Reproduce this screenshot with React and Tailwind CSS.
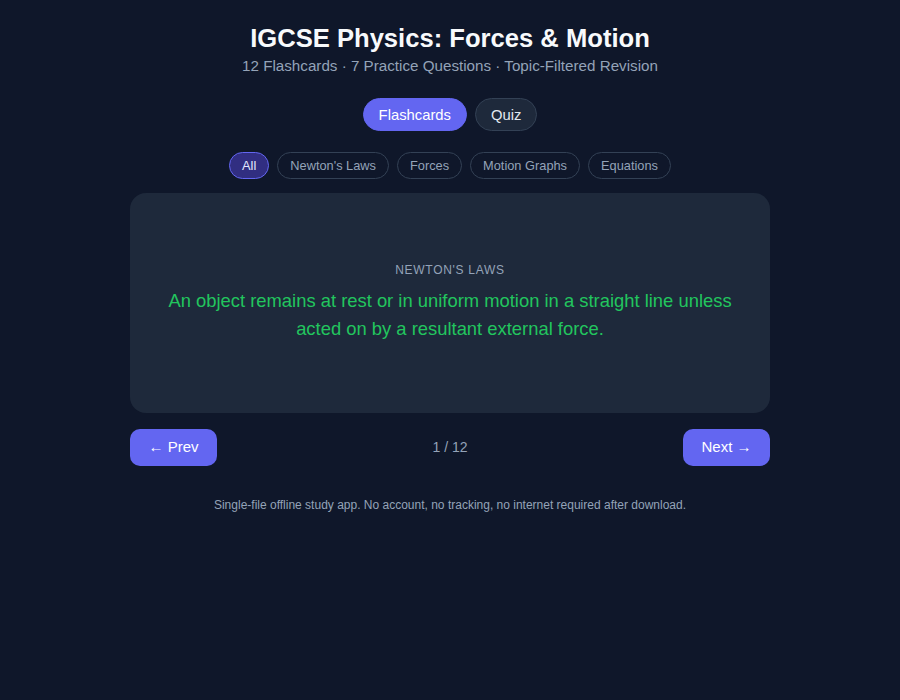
import { useState } from 'react';

const topics = ['All', "Newton's Laws", 'Forces', 'Motion Graphs', 'Equations'];

const cards = [
  {
    topic: "Newton's Laws",
    text: 'An object remains at rest or in uniform motion in a straight line unless acted on by a resultant external force.',
  },
];

export default function App() {
  const [mode, setMode] = useState('flashcards');
  const [topic, setTopic] = useState('All');
  const [index] = useState(0);
  const card = cards[index];

  return (
    <div className="min-h-screen bg-[#0f172a] text-[#e2e8f0] font-['Liberation_Sans',Arial,sans-serif]">
      <div className="max-w-[640px] mx-auto pt-[23px] pb-10">
        <header className="text-center">
          <h1 className="text-[25.6px] leading-[30px] font-bold text-[#f8fafc]">IGCSE Physics: Forces &amp; Motion</h1>
          <p className="text-[15.2px] leading-[18px] mt-[4px] text-[#94a3b8]">
            12 Flashcards · 7 Practice Questions · Topic-Filtered Revision
          </p>
        </header>

        <div className="flex justify-center gap-2 mt-[23px]">
          <button
            onClick={() => setMode('flashcards')}
            className={`h-[33px] pt-[1px] px-[15px] rounded-full text-[14.8px] border ${mode === 'flashcards' ? 'bg-[#6366f1] border-[#6366f1] text-white' : 'bg-[#1e293b] border-[#334155] text-[#e2e8f0]'}`}
          >
            Flashcards
          </button>
          <button
            onClick={() => setMode('quiz')}
            className={`h-[33px] pt-[1px] px-[15px] rounded-full text-[14.8px] border ${mode === 'quiz' ? 'bg-[#6366f1] border-[#6366f1] text-white' : 'bg-[#1e293b] border-[#334155] text-[#e2e8f0]'}`}
          >
            Quiz
          </button>
        </div>

        <div className="flex justify-center gap-2 mt-[21px]">
          {topics.map((t) => (
            <button
              key={t}
              onClick={() => setTopic(t)}
              className={`h-[27px] px-3 rounded-full text-[12.8px] border ${topic === t ? 'bg-[#312e81] border-[#6366f1] text-[#e0e7ff]' : 'bg-transparent border-[#334155] text-[#94a3b8]'}`}
            >
              {t}
            </button>
          ))}
        </div>

        <div className="mt-[14px] h-[220px] rounded-2xl bg-[#1e293b] flex flex-col items-center pt-[70px] px-8 text-center">
          <div className="text-[12px] leading-[14px] tracking-[0.06em] uppercase text-[#94a3b8]">{card.topic}</div>
          <p className="text-[18.4px] leading-[28px] text-[#22c55e] mt-[10px] max-w-[590px]">{card.text}</p>
        </div>

        <div className="flex items-center justify-between mt-4">
          <button className="h-[37px] w-[87px] rounded-[10px] bg-[#6366f1] text-white text-[15px]">← Prev</button>
          <span className="text-[14px] text-[#94a3b8]">{index + 1} / 12</span>
          <button className="h-[37px] w-[87px] rounded-[10px] bg-[#6366f1] text-white text-[15px]">Next →</button>
        </div>

        <p className="text-center text-[12px] text-[#94a3b8] mt-[30px]">
          Single-file offline study app. No account, no tracking, no internet required after download.
        </p>
      </div>
    </div>
  );
}
